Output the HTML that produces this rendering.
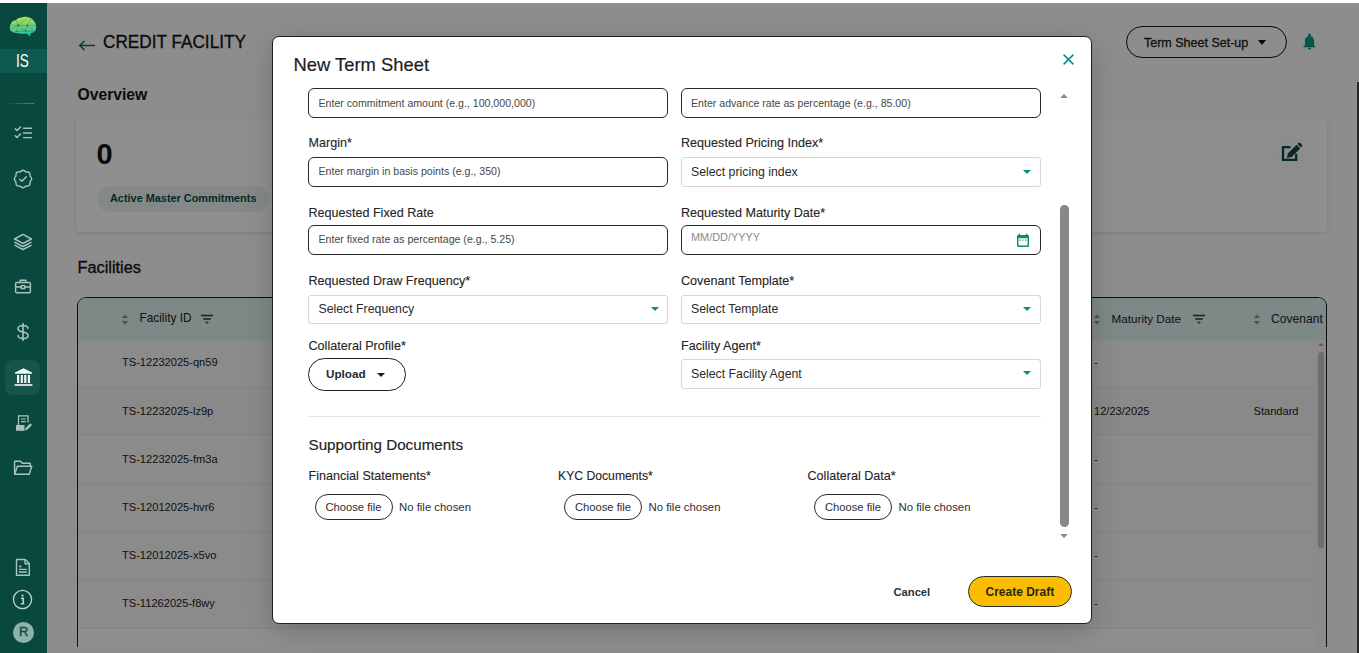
<!DOCTYPE html>
<html><head><meta charset="utf-8">
<style>
*{box-sizing:border-box;margin:0;padding:0}
html,body{width:1359px;height:653px;overflow:hidden;background:#fff;font-family:"Liberation Sans",sans-serif;position:relative}
.a{position:absolute}
.t{position:absolute;white-space:nowrap;line-height:1}
#page{position:absolute;left:0;top:0;width:1359px;height:653px;background:#fbfbfb;overflow:hidden}
#ov{position:absolute;left:0;top:3px;width:1359px;height:650px;background:rgba(0,0,0,0.44)}
#side{position:absolute;left:0;top:3px;width:47px;height:650px;background:#09483e}
#modal{position:absolute;left:272px;top:36px;width:820px;height:588px;background:#fff;border:1px solid #1f1f1f;border-radius:7px;box-shadow:0 8px 28px rgba(0,0,0,0.18)}
.inp{position:absolute;height:30px;border:1px solid #2a2a2a;border-radius:6px;background:#fff}
.sel{position:absolute;height:30px;border:1px solid #d6d6d6;border-radius:3px;background:#fff}
.lab{font-size:12.6px;color:#262626;-webkit-text-stroke:0.12px #262626}
.ph{font-size:10.6px;color:#474747}
.stx{font-size:12.3px;color:#2a2a2a}
.tri{position:absolute;width:0;height:0;border-left:4px solid transparent;border-right:4px solid transparent;border-top:4.5px solid #0b8a80}
.fbtn{position:absolute;height:25.5px;width:78px;border:1px solid #2a2a2a;border-radius:13px;background:#fff}
.row{position:absolute;left:0;width:1238px;height:48.25px;border-bottom:1px solid #e6e6e6}
.cell{font-size:11.1px;color:#222}
</style></head><body>

<div id="page">
  <!-- header -->
  <svg class="a" style="left:78px;top:40px" width="18" height="11" viewBox="0 0 18 11"><path d="M17 5.5H2M6.5 1L1.8 5.5L6.5 10" fill="none" stroke="#0e6b5f" stroke-width="1.6"/></svg>
  <div class="t" style="left:103px;top:33px;font-size:17.2px;color:#141414;-webkit-text-stroke:0.3px #141414;transform:scaleY(1.1);transform-origin:0 0">CREDIT FACILITY</div>
  <div class="t" style="left:77.5px;top:86.5px;font-size:15.7px;font-weight:700;color:#161616">Overview</div>
  <div class="a" style="left:1126px;top:26px;width:161px;height:32px;border:1px solid #111;border-radius:16px"></div>
  <div class="t" style="left:1144px;top:37px;font-size:12.5px;color:#1c1c1c;-webkit-text-stroke:0.3px #1c1c1c">Term Sheet Set-up</div>
  <div class="tri" style="left:1257.8px;top:39.8px;border-top-color:#111;border-left-width:4.2px;border-right-width:4.2px;border-top-width:5px"></div>
  <svg class="a" style="left:1302px;top:32.5px" width="15" height="17" viewBox="0 0 15 17" fill="#0e9a86"><circle cx="7.5" cy="2" r="1.5"/><path d="M2.9 12.2V8C2.9 5 4.9 2.9 7.5 2.9C10.1 2.9 12.1 5 12.1 8V12.2L13.9 13.9V14.2H1.1V13.9Z"/><ellipse cx="7.5" cy="15.6" rx="1.7" ry="1"/></svg>

  <!-- overview card -->
  <div class="a" style="left:76px;top:119px;width:1251px;height:113px;background:#fff;border-radius:4px;box-shadow:0 1px 4px rgba(0,0,0,0.12)"></div>
  <div class="t" style="left:96.5px;top:140px;font-size:29px;font-weight:700;color:#151515">0</div>
  <div class="a" style="left:97px;top:185.5px;width:172px;height:26px;border-radius:13px;background:#eef3f3"></div>
  <div class="t" style="left:110px;top:193px;font-size:10.9px;font-weight:700;color:#0d4a42">Active Master Commitments</div>
  <div class="a" style="left:1271px;top:133px;width:40px;height:40px;border-radius:20px;background:rgba(0,40,30,0.015)"></div>
  <svg class="a" style="left:1280px;top:142px" width="24" height="22" viewBox="0 0 24 22"><path d="M10.5 5.1H3V17.8H16.2V11.8" fill="none" stroke="#0b4a40" stroke-width="2.3"/><path d="M6.8 16L8 11.3L16.6 2.7L20.3 6.4L11.7 15Z" fill="#0b4a40"/><path d="M17.4 1.9L18.3 1A1.3 1.3 0 0 1 20.2 1L21.9 2.7A1.3 1.3 0 0 1 21.9 4.6L21 5.5Z" fill="#0b4a40"/></svg>

  <div class="t" style="left:77.5px;top:259px;font-size:16.3px;color:#161616;-webkit-text-stroke:0.35px #161616">Facilities</div>

  <!-- table -->
  <div class="a" style="left:77px;top:297px;width:1250px;height:350px;border:1px solid #1a1a1a;border-bottom:none;border-radius:9px 9px 0 0;background:#fff"></div>
  <div class="a" style="left:78px;top:298px;width:1248px;height:42.1px;background:#dff3f0;border-radius:8px 8px 0 0"></div>
  <svg class="a" style="left:121px;top:313.5px" width="8" height="11" viewBox="0 0 8 11" fill="#8a8f8e"><path d="M4 0.5L7.2 4H0.8Z M4 10.5L7.2 7H0.8Z"/></svg>
  <div class="t" style="left:139.5px;top:312.5px;font-size:11.85px;color:#222">Facility ID</div>
  <svg class="a" style="left:200px;top:314px" width="14" height="10" viewBox="0 0 14 10" fill="none" stroke="#3a3a3a" stroke-width="1.3"><path d="M1 1.5H13M3.3 5H10.7M5.6 8.5H8.4"/></svg>
  <svg class="a" style="left:1093px;top:313.5px" width="8" height="11" viewBox="0 0 8 11" fill="#8a8f8e"><path d="M4 0.5L7.2 4H0.8Z M4 10.5L7.2 7H0.8Z"/></svg>
  <div class="t" style="left:1111.5px;top:312.5px;font-size:11.7px;color:#222">Maturity Date</div>
  <svg class="a" style="left:1192px;top:314px" width="14" height="10" viewBox="0 0 14 10" fill="none" stroke="#3a3a3a" stroke-width="1.3"><path d="M1 1.5H13M3.3 5H10.7M5.6 8.5H8.4"/></svg>
  <svg class="a" style="left:1253px;top:313.5px" width="8" height="11" viewBox="0 0 8 11" fill="#8a8f8e"><path d="M4 0.5L7.2 4H0.8Z M4 10.5L7.2 7H0.8Z"/></svg>
  <div class="t" style="left:1271px;top:312.5px;font-size:12.1px;color:#222">Covenant</div>

  <div class="a" style="left:78px;top:340.1px;width:1238px;height:48.2px;background:#f8f8f8;border-bottom:1px solid #ececec"></div>
<div class="t cell" style="left:122px;top:357.3px">TS-12232025-qn59</div>
<div class="t cell" style="left:1094px;top:357.3px">-</div>
<div class="a" style="left:78px;top:388.3px;width:1238px;height:48.2px;background:#f4f4f4;border-bottom:1px solid #ececec"></div>
<div class="t cell" style="left:122px;top:405.5px">TS-12232025-lz9p</div>
<div class="t cell" style="left:1094px;top:405.5px">12/23/2025</div>
<div class="t cell" style="left:1253.5px;top:405.5px">Standard</div>
<div class="a" style="left:78px;top:436.5px;width:1238px;height:48.2px;background:#f8f8f8;border-bottom:1px solid #ececec"></div>
<div class="t cell" style="left:122px;top:453.7px">TS-12232025-fm3a</div>
<div class="t cell" style="left:1094px;top:453.7px">-</div>
<div class="a" style="left:78px;top:484.7px;width:1238px;height:48.2px;background:#f8f8f8;border-bottom:1px solid #ececec"></div>
<div class="t cell" style="left:122px;top:501.9px">TS-12012025-hvr6</div>
<div class="t cell" style="left:1094px;top:501.9px">-</div>
<div class="a" style="left:78px;top:532.9px;width:1238px;height:48.2px;background:#f8f8f8;border-bottom:1px solid #ececec"></div>
<div class="t cell" style="left:122px;top:550.1px">TS-12012025-x5vo</div>
<div class="t cell" style="left:1094px;top:550.1px">-</div>
<div class="a" style="left:78px;top:581.1px;width:1238px;height:48.2px;background:#f8f8f8;border-bottom:1px solid #ececec"></div>
<div class="t cell" style="left:122px;top:598.3px">TS-11262025-f8wy</div>
<div class="t cell" style="left:1094px;top:598.3px">-</div>
<!-- inner scrollbar -->
  <div class="a" style="left:1316px;top:340px;width:10px;height:307px;background:#f6f6f6"></div>
  <div class="a" style="left:1318px;top:343px;width:0;height:0;border-left:3px solid transparent;border-right:3px solid transparent;border-bottom:3.5px solid #a3a3a3"></div>
  <div class="a" style="left:1318px;top:352px;width:6px;height:196px;border-radius:3px;background:#c4c4c4"></div>
  <!-- page scrollbar -->
  <div class="a" style="left:1357px;top:82px;width:2px;height:571px;background:#4a4a4a"></div>
</div>
<div id="ov"></div>
<div class="a" style="left:0;top:0;width:1359px;height:3px;background:#fff"></div>

<div id="side">
  <svg class="a" style="left:9px;top:13px" width="29" height="22" viewBox="0 0 29 22">
    <defs><linearGradient id="bg1" x1="0.2" y1="0" x2="0.35" y2="1"><stop offset="0" stop-color="#b8e052"/><stop offset="0.5" stop-color="#6fd17a"/><stop offset="0.8" stop-color="#3cc79a"/><stop offset="1" stop-color="#1ab8b0"/></linearGradient></defs>
    <path d="M1 13.5C0.6 11 1 9 2 7.8C2.5 5.5 4.5 4.2 7 4.3C8 2.5 10 1.6 12.5 1.6C14.5 0.8 17 0.6 19 1.3C21 1.5 23 2.6 24.2 4.2C26 5.5 27.2 8 27 10.5C27.5 12.5 26.8 14.5 25.2 16C23.8 16.8 22.5 17 21.8 17L21 20.8L17.8 17.6C15 18 12 17.8 9.5 17.2C7 17.3 4.5 16.8 3 15.8C2 15.3 1.3 14.5 1 13.5Z" fill="url(#bg1)"/>
    <path d="M1.5 9.3H26.5M7 4.3L9.3 9.3L7 15.5M9.3 9.3L18.3 2M18.3 9.3L22 2.8M18.3 9.3L16.5 15M9.3 9.3L16.5 15L25.5 15.5M7 15.5L16.5 15M18.3 9.3L25.5 15.5M2 13L9.3 9.3" stroke="#0a4a40" stroke-width="0.5" fill="none" opacity="0.55"/>
    <circle cx="9.3" cy="9.3" r="0.9" fill="#0a4a40" opacity="0.6"/><circle cx="18.3" cy="9.3" r="0.9" fill="#0a4a40" opacity="0.6"/><circle cx="7" cy="15.5" r="0.8" fill="#0a4a40" opacity="0.5"/><circle cx="16.5" cy="15" r="0.8" fill="#0a4a40" opacity="0.5"/>
  </svg>
  <div class="a" style="left:0;top:46px;width:47px;height:24px;background:#0d5a4f"></div>
  <div class="t" style="left:16px;top:48px;font-size:17px;color:#fff;transform:scaleX(0.8) scaleY(1.12);transform-origin:0 0">IS</div>
  <div class="a" style="left:6px;top:100px;width:28px;height:1px;background:linear-gradient(90deg,rgba(140,180,170,0),rgba(140,180,170,0.55))"></div>
  <!-- checklist -->
  <svg class="a" style="left:14px;top:123px" width="19" height="14" viewBox="0 0 19 14" fill="none" stroke="#a9c3bc" stroke-width="1.4" stroke-linecap="round" stroke-linejoin="round">
    <path d="M1.2 2.7L3 4.5L6.5 1M1.2 9.7L3 11.5L6.5 8M9.5 2.2H17.5M9.5 7H17.5M9.5 11.6H17.5"/>
  </svg>
  <!-- badge check -->
  <svg class="a" style="left:13px;top:166px" width="20" height="20" viewBox="0 0 20 20" fill="none" stroke="#a9c3bc" stroke-width="1.4" stroke-linejoin="round" stroke-linecap="round">
    <path d="M10 1.3C11.3 1.3 12 2.5 13.1 2.9C14.3 3.2 15.6 2.6 16.4 3.6C17.3 4.5 16.8 5.8 17.1 7C17.5 8.1 18.7 8.7 18.7 10C18.7 11.3 17.5 11.9 17.1 13C16.8 14.2 17.3 15.5 16.4 16.4C15.5 17.3 14.2 16.8 13 17.1C11.9 17.5 11.3 18.7 10 18.7C8.7 18.7 8.1 17.5 7 17.1C5.8 16.8 4.5 17.3 3.6 16.4C2.7 15.5 3.2 14.2 2.9 13C2.5 11.9 1.3 11.3 1.3 10C1.3 8.7 2.5 8.1 2.9 7C3.2 5.8 2.7 4.5 3.6 3.6C4.5 2.7 5.8 3.2 7 2.9C8.1 2.5 8.7 1.3 10 1.3Z"/>
    <path d="M6.7 10.2L8.9 12.2L13.3 7.8"/>
  </svg>
  <!-- layers -->
  <svg class="a" style="left:13px;top:227.5px" width="20" height="20" viewBox="0 0 20 20" fill="none" stroke="#a9c3bc" stroke-width="1.5" stroke-linejoin="round">
    <path d="M10 3.3L18.5 8L10 12.3L1.5 8Z"/>
    <path d="M1.5 11.2L10 15.5L18.5 11.2M1.5 14.2L10 18.5L18.5 14.2"/>
  </svg>
  <!-- briefcase -->
  <svg class="a" style="left:14px;top:274px" width="18" height="18" viewBox="0 0 18 18" fill="none" stroke="#a9c3bc" stroke-width="1.45" stroke-linejoin="round">
    <rect x="1.6" y="5.4" width="14.8" height="10.4" rx="1.2"/>
    <path d="M6.2 5.4V3.2H11.8V5.4M1.6 10H7.3M10.7 10H16.4"/>
    <rect x="7.3" y="8.6" width="3.4" height="2.8"/>
  </svg>
  <!-- dollar -->
  <svg class="a" style="left:15px;top:319px" width="16" height="20" viewBox="0 0 16 20" fill="none" stroke="#a9c3bc" stroke-width="1.6" stroke-linecap="round">
    <path d="M12.8 6.3C12.8 4.6 10.9 3.5 8 3.5C5 3.5 3 4.8 3 6.7C3 8.8 5 9.4 8 10C11 10.6 13 11.3 13 13.4C13 15.3 11 16.5 8 16.5C5 16.5 3 15.3 3 13.5M8 1.5V18.5"/>
  </svg>
  <!-- active bank -->
  <div class="a" style="left:5px;top:357px;width:35px;height:35px;border-radius:8px;background:#175449"></div>
  <svg class="a" style="left:14px;top:364px" width="19" height="20" viewBox="0 0 19 20" fill="#f4f8f7">
    <path d="M9.5 1.2L18 5.4V6.8H1V5.4Z"/>
    <rect x="3" y="8" width="2.2" height="8"/><rect x="6.7" y="8" width="2.2" height="8"/><rect x="10.2" y="8" width="2.2" height="8"/><rect x="13.8" y="8" width="2.2" height="8"/>
    <rect x="0.6" y="17.2" width="17.8" height="1.6"/>
  </svg>
  <!-- doc edit -->
  <svg class="a" style="left:15px;top:411px" width="18" height="18" viewBox="0 0 18 18">
    <path d="M3.5 11V1.8H13V8.5" fill="none" stroke="#a9c3bc" stroke-width="1.3"/>
    <path d="M6 5H10.8M6 7.7H10.8" stroke="#a9c3bc" stroke-width="1.2"/>
    <path d="M1 11H9.5V16.8H1Z" fill="#a9c3bc"/>
    <path d="M10 16.5L10.6 14L15.3 9.3L17 11L12.3 15.7Z" fill="#a9c3bc"/>
  </svg>
  <!-- folder -->
  <svg class="a" style="left:13px;top:455px" width="20" height="19" viewBox="0 0 20 19" fill="none" stroke="#a9c3bc" stroke-width="1.45" stroke-linejoin="round">
    <path d="M1.6 16.3V3.2H7.5L9.3 5.2H17.2V8"/>
    <path d="M1.6 16.3L4.3 8.3H18.8L16.2 16.3Z"/>
  </svg>
  <!-- document -->
  <svg class="a" style="left:14px;top:555px" width="18" height="19" viewBox="0 0 18 19" fill="none" stroke="#a9c3bc" stroke-width="1.4" stroke-linejoin="round">
    <path d="M2.5 1.5H11.3L15.3 5.5V17.3H2.5Z"/>
    <path d="M11 1.5V5.8H15.3" />
    <path d="M5 8.5H7.5M5 11.3H12.8M5 14H12.8" stroke-width="1.3"/>
  </svg>
  <!-- info -->
  <svg class="a" style="left:12px;top:586px" width="21" height="21" viewBox="0 0 21 21" fill="none" stroke="#b9d0ca" stroke-width="1.35">
    <circle cx="10.5" cy="10.5" r="9.1"/>
    <circle cx="10.5" cy="6.6" r="1.1" fill="#b9d0ca" stroke="none"/>
    <path d="M9 9.2H11.2V14.6M8.9 14.8H12.3" stroke-width="1.6"/>
  </svg>
  <!-- avatar -->
  <div class="a" style="left:13px;top:619px;width:21px;height:21px;border-radius:50%;background:#8db3ad"></div>
  <div class="t" style="left:19px;top:622px;font-size:13px;color:#0b4a40;-webkit-text-stroke:0.35px #0b4a40">R</div>
</div>

<div id="modal"></div>
<div class="t" style="left:293.5px;top:55.8px;font-size:18.4px;color:#1e1e1e;-webkit-text-stroke:0.2px #1e1e1e">New Term Sheet</div>
<svg class="a" style="left:1062px;top:52.5px" width="13" height="13" viewBox="0 0 13 13"><path d="M1.6 1.6L11.4 11.4M11.4 1.6L1.6 11.4" stroke="#0b8a80" stroke-width="1.5"/></svg>

<!-- row A -->
<div class="inp" style="left:308px;top:88px;width:360px"></div>
<div class="t ph" style="left:318.5px;top:97.5px">Enter commitment amount (e.g., 100,000,000)</div>
<div class="inp" style="left:681px;top:88px;width:360px"></div>
<div class="t ph" style="left:691px;top:97.5px">Enter advance rate as percentage (e.g., 85.00)</div>

<!-- row B -->
<div class="t lab" style="left:308.5px;top:137.4px">Margin*</div>
<div class="t lab" style="left:681px;top:137.4px">Requested Pricing Index*</div>
<div class="inp" style="left:308px;top:157px;width:360px"></div>
<div class="t ph" style="left:318.5px;top:166.3px">Enter margin in basis points (e.g., 350)</div>
<div class="sel" style="left:681px;top:157px;width:360px"></div>
<div class="t stx" style="left:691px;top:165.9px">Select pricing index</div>
<div class="tri" style="left:1023px;top:169.5px"></div>

<!-- row C -->
<div class="t lab" style="left:308.5px;top:206.6px">Requested Fixed Rate</div>
<div class="t lab" style="left:681px;top:206.6px">Requested Maturity Date*</div>
<div class="inp" style="left:308px;top:225px;width:360px"></div>
<div class="t ph" style="left:318.5px;top:234.3px">Enter fixed rate as percentage (e.g., 5.25)</div>
<div class="inp" style="left:681px;top:225px;width:360px"></div>
<div class="t" style="left:691px;top:231.6px;font-size:10.9px;color:#8a8a8a">MM/DD/YYYY</div>
<svg class="a" style="left:1016px;top:233px" width="14" height="15" viewBox="0 0 14 15" fill="#0c8a76"><path d="M1 3.2A1.2 1.2 0 0 1 2.2 2H11.8A1.2 1.2 0 0 1 13 3.2V12.8A1.2 1.2 0 0 1 11.8 14H2.2A1.2 1.2 0 0 1 1 12.8ZM2.4 5.2V12.6H11.6V5.2Z"/><rect x="2.7" y="0.6" width="1.3" height="2"/><rect x="10" y="0.6" width="1.3" height="2"/><rect x="3.6" y="6.4" width="1.2" height="1.4"/><rect x="6.4" y="6.4" width="1.2" height="1.4" opacity="0.7"/><rect x="9.2" y="6.4" width="1.2" height="1.4"/></svg>

<!-- row D -->
<div class="t lab" style="left:308.5px;top:274.8px">Requested Draw Frequency*</div>
<div class="t lab" style="left:681px;top:274.8px">Covenant Template*</div>
<div class="sel" style="left:308px;top:294.5px;width:360px;height:29px"></div>
<div class="t stx" style="left:318.5px;top:303px">Select Frequency</div>
<div class="tri" style="left:651px;top:306.5px"></div>
<div class="sel" style="left:681px;top:294.5px;width:360px;height:29px"></div>
<div class="t stx" style="left:691px;top:303px">Select Template</div>
<div class="tri" style="left:1023px;top:306.5px"></div>

<!-- row E -->
<div class="t lab" style="left:308.5px;top:340.2px">Collateral Profile*</div>
<div class="t lab" style="left:681px;top:340.2px">Facility Agent*</div>
<div class="a" style="left:308px;top:358px;width:98px;height:32.5px;border:1px solid #1f1f1f;border-radius:17px"></div>
<div class="t" style="left:326px;top:367.8px;font-size:11.7px;font-weight:700;color:#1f2a36">Upload</div>
<div class="tri" style="left:377px;top:373px;border-top-color:#1a1a1a"></div>
<div class="sel" style="left:681px;top:358.5px;width:360px;height:30px"></div>
<div class="t stx" style="left:691px;top:367.5px">Select Facility Agent</div>
<div class="tri" style="left:1023px;top:371px"></div>

<div class="a" style="left:308px;top:416px;width:733px;height:1px;background:#e3e3e3"></div>
<div class="t" style="left:308.5px;top:436.8px;font-size:15.2px;color:#222;-webkit-text-stroke:0.15px #222">Supporting Documents</div>

<div class="t lab" style="left:308.5px;top:470.4px">Financial Statements*</div>
<div class="t lab" style="left:558px;top:470.4px;font-size:12.2px">KYC Documents*</div>
<div class="t lab" style="left:807.5px;top:470.4px">Collateral Data*</div>

<div class="fbtn" style="left:314.5px;top:494px"></div>
<div class="t" style="left:325.5px;top:501.8px;font-size:11.2px;color:#2e2e2e">Choose file</div>
<div class="t" style="left:399px;top:501.8px;font-size:11.36px;color:#2e2e2e">No file chosen</div>
<div class="fbtn" style="left:564px;top:494px"></div>
<div class="t" style="left:575px;top:501.8px;font-size:11.2px;color:#2e2e2e">Choose file</div>
<div class="t" style="left:648.5px;top:501.8px;font-size:11.36px;color:#2e2e2e">No file chosen</div>
<div class="fbtn" style="left:814px;top:494px"></div>
<div class="t" style="left:825px;top:501.8px;font-size:11.2px;color:#2e2e2e">Choose file</div>
<div class="t" style="left:898.5px;top:501.8px;font-size:11.36px;color:#2e2e2e">No file chosen</div>

<!-- modal scrollbar -->
<div class="a" style="left:1060px;top:93.8px;width:0;height:0;border-left:4.6px solid transparent;border-right:4.6px solid transparent;border-bottom:4.8px solid #8f8f8f"></div>
<div class="a" style="left:1060px;top:205px;width:9px;height:322px;border-radius:4.5px;background:#888"></div>
<div class="a" style="left:1060px;top:533.8px;width:0;height:0;border-left:4.6px solid transparent;border-right:4.6px solid transparent;border-top:4.8px solid #8f8f8f"></div>

<!-- footer -->
<div class="t" style="left:893.5px;top:586.7px;font-size:11.2px;font-weight:700;color:#253241">Cancel</div>
<div class="a" style="left:968px;top:576px;width:104px;height:31px;border:1px solid #2a2a2a;border-radius:16px;background:#fbbc04"></div>
<div class="t" style="left:985.5px;top:585.8px;font-size:12px;font-weight:700;color:#2a2a10">Create Draft</div>


</body></html>
